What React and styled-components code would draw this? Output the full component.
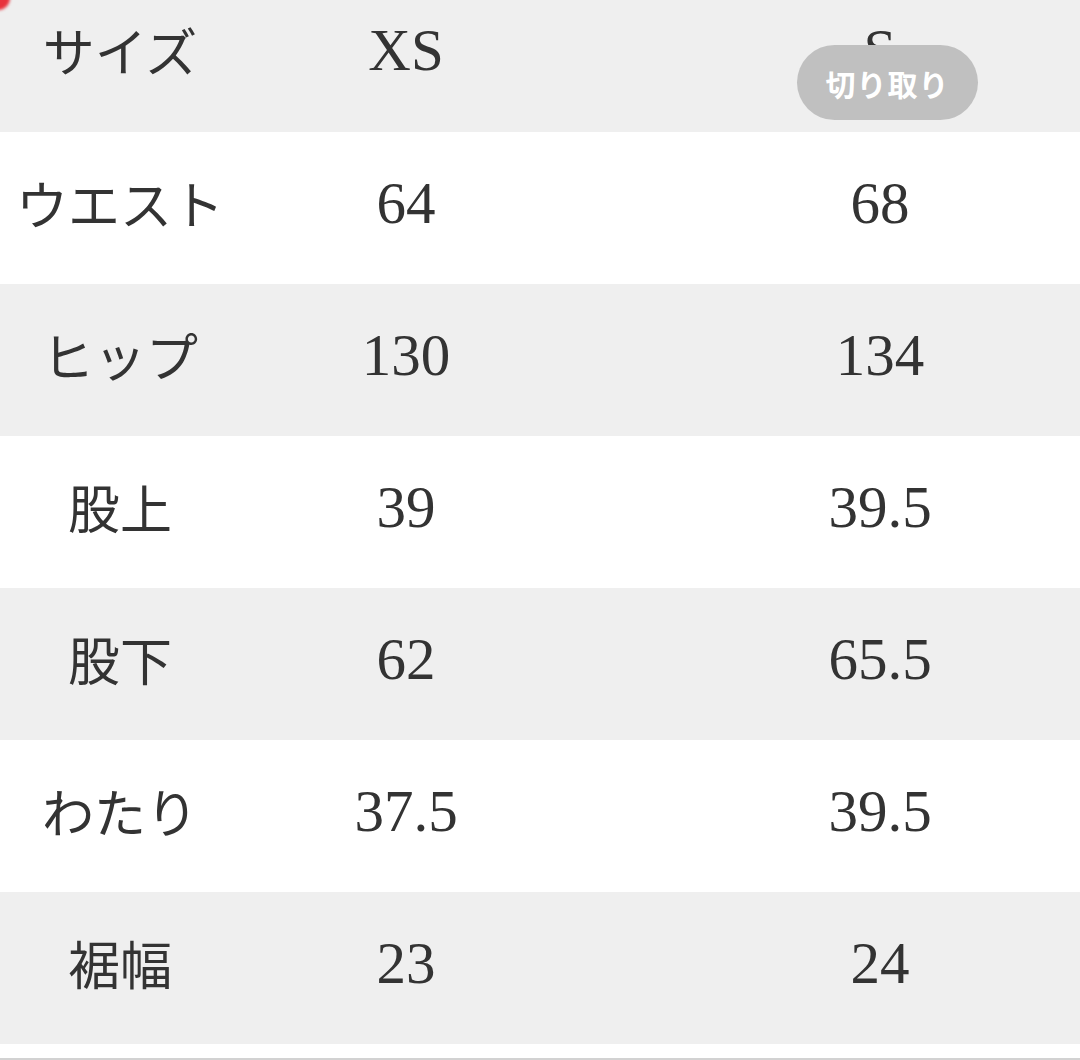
import React from "react";
import styled, { createGlobalStyle } from "styled-components";

const GlobalStyle = createGlobalStyle`
  html, body {
    margin: 0;
    padding: 0;
    background: #ffffff;
  }
`;

const Page = styled.div`
  position: relative;
  width: 1080px;
  height: 1060px;
  overflow: hidden;
  background: #ffffff;
`;

const Table = styled.div`
  display: flex;
  flex-direction: column;
  border-bottom: 2px solid #d2d2d2;
  padding-bottom: 14px;
`;

const Row = styled.div`
  display: grid;
  grid-template-columns: 240px 332px 1fr;
  align-items: center;
  height: ${(p) => p.$height}px;
  padding-bottom: ${(p) => p.$padBottom || 0}px;
  box-sizing: border-box;
  background: ${(p) => (p.$shaded ? "#efefef" : "#ffffff")};
`;

const Label = styled.div`
  text-align: center;
  font-family: "Noto Sans CJK JP", "Noto Sans", sans-serif;
  font-weight: 400;
  font-size: 52px;
  line-height: 1;
  color: #333333;
`;

const Value = styled.div`
  text-align: center;
  font-family: "Liberation Serif", "DejaVu Serif", serif;
  font-size: 59px;
  line-height: 1;
  color: #333333;
  padding-left: ${(p) => p.$offset || 0}px;
`;

const CutPill = styled.div`
  position: absolute;
  left: 797px;
  top: 45px;
  width: 181px;
  height: 75px;
  border-radius: 38px;
  background: #c0c0c0;
  color: #ffffff;
  font-family: "Noto Sans CJK JP", "Noto Sans", sans-serif;
  font-weight: 700;
  font-size: 30px;
  display: flex;
  align-items: center;
  justify-content: center;
  letter-spacing: 1px;
`;

const RedCorner = styled.div`
  position: absolute;
  left: -14px;
  top: -14px;
  width: 24px;
  height: 24px;
  border-radius: 50%;
  background: #e8323c;
  filter: blur(1.5px);
`;

const rows = [
  ["ウエスト", "64", "68"],
  ["ヒップ", "130", "134"],
  ["股上", "39", "39.5"],
  ["股下", "62", "65.5"],
  ["わたり", "37.5", "39.5"],
  ["裾幅", "23", "24"],
];

export default function App() {
  return (
    <Page>
      <GlobalStyle />
      <Table>
        <Row $height={132} $padBottom={32} $shaded>
          <Label>サイズ</Label>
          <Value>XS</Value>
          <Value $offset={108}>S</Value>
        </Row>
        {rows.map(([label, xs, s], i) => (
          <Row key={label} $height={152} $padBottom={10} $shaded={i % 2 === 1}>
            <Label>{label}</Label>
            <Value>{xs}</Value>
            <Value $offset={108}>{s}</Value>
          </Row>
        ))}
      </Table>
      <CutPill>切り取り</CutPill>
      <RedCorner />
    </Page>
  );
}
